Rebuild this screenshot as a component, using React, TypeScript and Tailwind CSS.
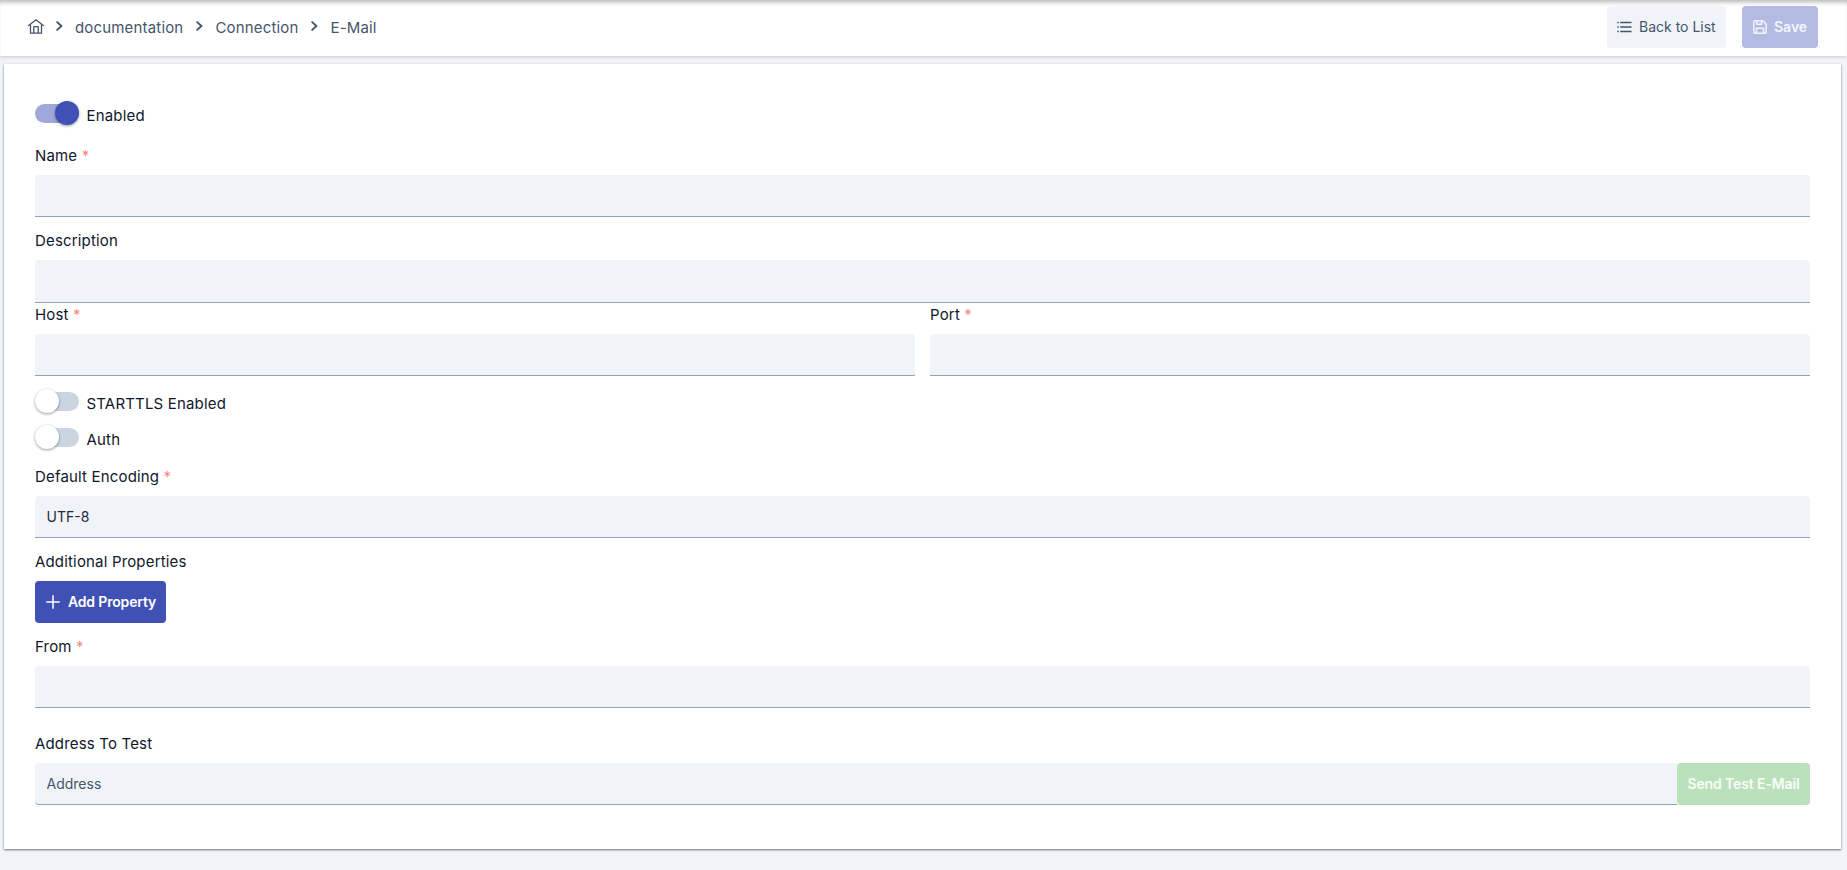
import React from "react";
import { useState } from "react";

interface FieldProps {
  label: string;
  required?: boolean;
  value?: string;
  className?: string;
  inputClassName?: string;
}

const Label = ({ label, required }: { label: string; required?: boolean }) => (
  <label className="block h-6 text-[15px] leading-6 tracking-[0.17px] text-slate-900">
    {label}
    {required && <span className="text-[#f88686]"> *</span>}
  </label>
);

const Field = ({ label, required, value = "", className = "", inputClassName = "h-[42px]" }: FieldProps) => (
  <div className={className}>
    <Label label={label} required={required} />
    <input
      defaultValue={value}
      className={`mt-[7px] block w-full rounded-t border-b border-slate-400 bg-[#f0f4f9] px-[11.5px] text-sm text-slate-800 outline-none ${inputClassName}`}
    />
  </div>
);

const Toggle = ({ label, initial = false, className = "" }: { label: string; initial?: boolean; className?: string }) => {
  const [checked, setChecked] = useState(initial);

  return (
    <div className={`flex h-6 items-start ${className}`}>
      <button
        type="button"
        onClick={() => setChecked(!checked)}
        className={`flex h-[19px] w-11 items-center rounded-full ${
          checked ? "justify-end bg-[#9fa8da]" : "justify-start bg-[#cbd5e1]"
        }`}
      >
        <span
          className={`-mt-px h-6 w-6 shrink-0 rounded-full shadow-[0_1px_3px_rgba(0,0,0,0.4)] ${
            checked ? "bg-[#3f51b5]" : "bg-white"
          }`}
        />
      </button>
      <span className="ml-[7.5px] text-[15px] leading-6 tracking-[0.17px] text-slate-900">{label}</span>
    </div>
  );
};

const HomeIcon = () => (
  <svg viewBox="0 0 16 15" className="h-[15px] w-4" fill="none" stroke="currentColor" strokeWidth="1.3" strokeLinejoin="round" strokeLinecap="round">
    <path d="M.7 6.6 8 .8l7.3 5.8M2.5 5.6v8.6h11V5.6M5.8 14V7.7h4.4V14" />
  </svg>
);

const Chevron = ({ className = "" }: { className?: string }) => (
  <svg viewBox="0 0 7 10" className={`h-2.5 w-[7px] ${className}`} fill="none" stroke="currentColor" strokeWidth="1.9" strokeLinejoin="round" strokeLinecap="round">
    <path d="M1.2 1.1 5.4 5 1.2 8.9" />
  </svg>
);

const ListIcon = () => (
  <svg viewBox="0 0 15 12" className="h-3 w-[15px]" fill="none" stroke="currentColor" strokeWidth="1.4">
    <path d="M.3 1.5h1.5M.3 6h1.5M.3 10.5h1.5M3.2 1.5h11.3M3.2 6h11.3M3.2 10.5h11.3" />
  </svg>
);

const SaveIcon = () => (
  <svg viewBox="0 0 14 14" className="h-3.5 w-3.5" fill="none" stroke="currentColor" strokeWidth="1.5" strokeLinejoin="round">
    <path d="M2 .8h7.8L13.2 4.2V12a1.3 1.3 0 0 1-1.3 1.3H2A1.3 1.3 0 0 1 .8 12V2A1.3 1.3 0 0 1 2 .8ZM3.8.9v3.4h4.7V.9M3.5 13.2V8.2h7v5" />
  </svg>
);

const PlusIcon = () => (
  <svg viewBox="0 0 14 14" className="h-3.5 w-3.5" fill="none" stroke="currentColor" strokeWidth="1.5" strokeLinecap="round">
    <path d="M7 .8v12.4M.8 7h12.4" />
  </svg>
);

export default function App() {
  return (
    <div className="h-[870px] w-full overflow-hidden bg-[#f0f4f9] font-['Inter',sans-serif]">
      <header className="flex h-14 items-start justify-between bg-white pr-[29px] pl-7 shadow-[0_1px_3px_rgba(0,0,0,0.16),inset_0_5px_5px_-3px_rgba(0,0,0,0.3)]">
        <nav className="mt-4 flex h-6 items-center text-[15px] leading-6 tracking-[0.17px] text-slate-600">
          <span className="-mt-1">
            <HomeIcon />
          </span>
          <Chevron className="-mt-1 ml-3" />
          <span className="ml-3">documentation</span>
          <Chevron className="-mt-1 ml-[13px]" />
          <span className="ml-3">Connection</span>
          <Chevron className="-mt-1 ml-[13px]" />
          <span className="ml-3">E-Mail</span>
        </nav>
        <div className="mt-1.5 flex gap-4">
          <button className="flex h-[42px] w-[119px] items-center gap-[7px] rounded bg-[#f0f4f9] pl-2.5 text-sm whitespace-nowrap text-slate-600">
            <ListIcon />
            Back to List
          </button>
          <button className="flex h-[42px] w-[76px] items-center gap-[7px] rounded bg-[#b4bbe2] pl-[11px] text-sm font-semibold text-[#f4f5fc]">
            <SaveIcon />
            Save
          </button>
        </div>
      </header>

      <main className="mt-2 mr-1.5 ml-1 h-[785px] bg-white pt-10 pr-[31px] pl-[31px] shadow-[0_1px_2px_rgba(0,0,0,0.55)]">
        <Toggle label="Enabled" initial />
        <Field label="Name" required className="mt-4" />
        <Field label="Description" className="mt-3" inputClassName="h-[43px]" />
        <div className="grid grid-cols-2 gap-[15px]">
          <Field label="Host" required />
          <Field label="Port" required />
        </div>
        <Toggle label="STARTTLS Enabled" className="mt-4" />
        <Toggle label="Auth" className="mt-3" />
        <Field label="Default Encoding" required value="UTF-8" className="mt-[13px]" />
        <div className="mt-3">
          <Label label="Additional Properties" />
          <button className="mt-[7px] flex h-[42px] w-[131px] items-center gap-2 rounded bg-[#3f51b5] pl-[11px] text-sm font-semibold tracking-[-0.17px] whitespace-nowrap text-white">
            <PlusIcon />
            Add Property
          </button>
        </div>
        <Field label="From" required className="mt-3" />
        <div className="mt-6">
          <Label label="Address To Test" />
          <div className="mt-[7px] flex">
            <input
              placeholder="Address"
              className="h-[42px] min-w-0 flex-1 rounded-l border-b border-slate-400 bg-[#f0f4f9] px-[11.5px] text-sm outline-none placeholder:text-slate-600"
            />
            <button className="h-[42px] w-[133px] rounded bg-[#bbe1bc] text-sm font-semibold tracking-[-0.12px] whitespace-nowrap text-[#f8fdf8]">
              Send Test E-Mail
            </button>
          </div>
        </div>
      </main>
    </div>
  );
}
